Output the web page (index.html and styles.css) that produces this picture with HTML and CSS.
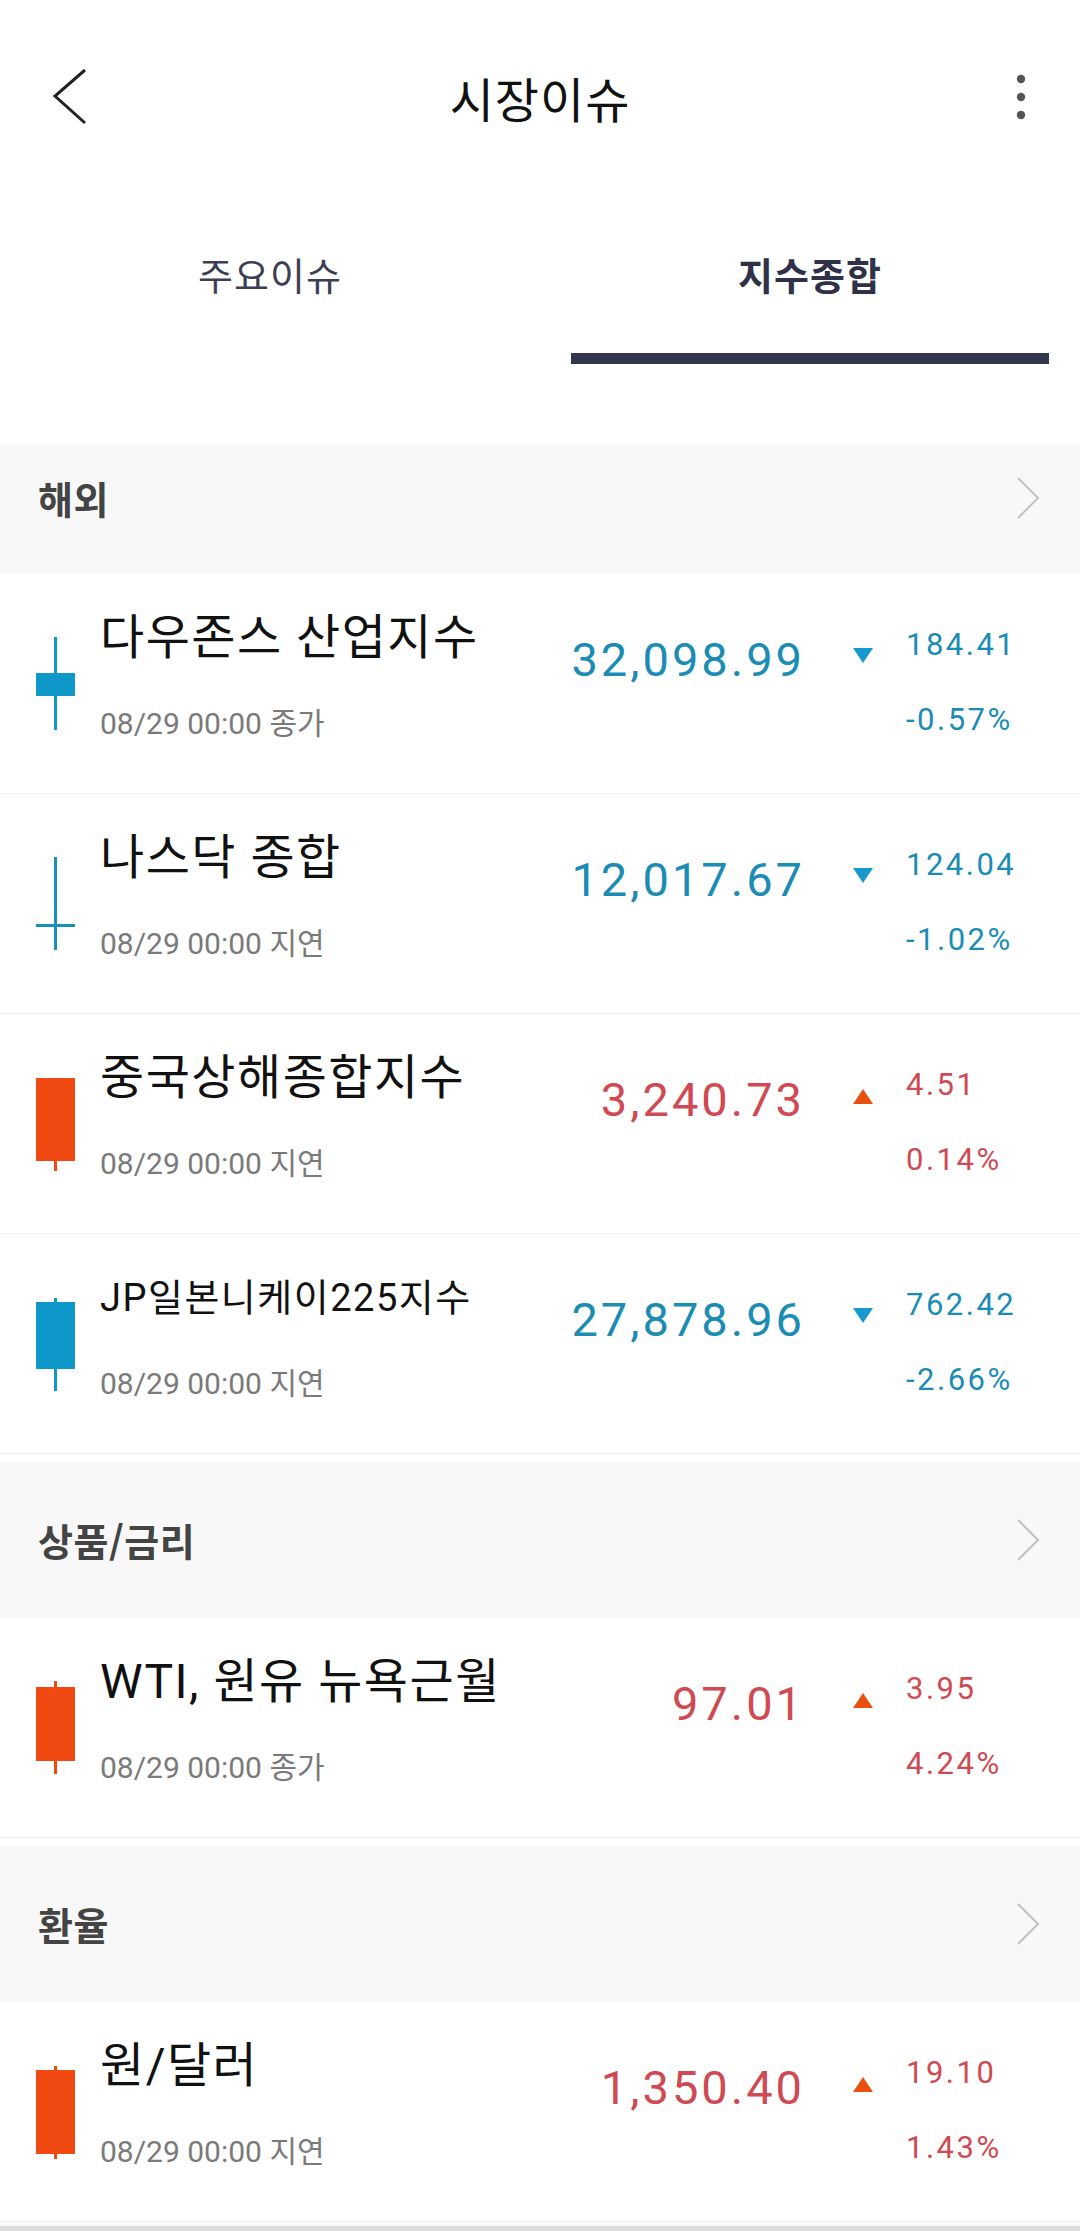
FILE: index.html
```html
<!DOCTYPE html>
<html lang="ko">
<head>
<meta charset="utf-8">
<title>시장이슈</title>
<link rel="stylesheet" href="styles.css">
</head>
<body>
<div class="app">
  <header class="appbar">
    <div class="appbar-side">
      <svg class="back" width="34" height="58" viewBox="0 0 34 58"><polyline points="32,2 2,28 32,55" fill="none" stroke="#222" stroke-width="3" stroke-linejoin="miter"/></svg>
    </div>
    <h1 class="title">시장이슈</h1>
    <div class="appbar-side right">
      <svg class="kebab" width="10" height="46" viewBox="0 0 10 46"><circle cx="5" cy="5" r="4.2" fill="#555"/><circle cx="5" cy="23" r="4.2" fill="#555"/><circle cx="5" cy="41" r="4.2" fill="#555"/></svg>
    </div>
  </header>

  <nav class="tabs">
    <div class="tab">주요이슈</div>
    <div class="tab active">지수종합</div>
  </nav>

  <section class="group first">
    <div class="sec-head"><span class="sec-title">해외</span><svg class="sec-chev" width="26" height="44" viewBox="0 0 26 44"><polyline points="3,2 23,22 3,42" fill="none" stroke="#c2c2c2" stroke-width="2"/></svg></div>

    <div class="row">
      <svg class="candle" width="39" height="94" viewBox="0 0 39 94"><rect x="18" y="0" width="3" height="93" fill="#0e98c9"/><rect x="0" y="36" width="39" height="23" fill="#0e98c9"/></svg>
      <div class="info"><div class="name">다우존스 산업지수</div><div class="date">08/29 00:00 종가</div></div>
      <div class="price down">32,098.99</div>
      <div class="arrow"><svg width="20" height="15" viewBox="0 0 20 15"><polygon points="0,0 20,0 10,15" fill="#1798cf"/></svg></div>
      <div class="change down"><div>184.41</div><div>-0.57%</div></div>
    </div>

    <div class="row">
      <svg class="candle" width="39" height="94" viewBox="0 0 39 94"><rect x="18" y="0" width="3" height="93" fill="#1891b6"/><rect x="0" y="67" width="39" height="3" fill="#1891b6"/></svg>
      <div class="info"><div class="name">나스닥 종합</div><div class="date">08/29 00:00 지연</div></div>
      <div class="price down">12,017.67</div>
      <div class="arrow"><svg width="20" height="15" viewBox="0 0 20 15"><polygon points="0,0 20,0 10,15" fill="#1798cf"/></svg></div>
      <div class="change down"><div>124.04</div><div>-1.02%</div></div>
    </div>

    <div class="row">
      <svg class="candle" width="39" height="94" viewBox="0 0 39 94"><rect x="18" y="80" width="3" height="14" fill="#f04a12"/><rect x="0" y="1" width="39" height="83" fill="#f04a12"/></svg>
      <div class="info"><div class="name">중국상해종합지수</div><div class="date">08/29 00:00 지연</div></div>
      <div class="price up">3,240.73</div>
      <div class="arrow up-arrow"><svg width="20" height="15" viewBox="0 0 20 15"><polygon points="10,0 20,15 0,15" fill="#e8500f"/></svg></div>
      <div class="change up"><div>4.51</div><div>0.14%</div></div>
    </div>

    <div class="row">
      <svg class="candle" width="39" height="94" viewBox="0 0 39 94"><rect x="18" y="1" width="3" height="93" fill="#0e98c9"/><rect x="0" y="5" width="39" height="67" fill="#0e98c9"/></svg>
      <div class="info"><div class="name small">JP일본니케이225지수</div><div class="date">08/29 00:00 지연</div></div>
      <div class="price down">27,878.96</div>
      <div class="arrow"><svg width="20" height="15" viewBox="0 0 20 15"><polygon points="0,0 20,0 10,15" fill="#1798cf"/></svg></div>
      <div class="change down"><div>762.42</div><div>-2.66%</div></div>
    </div>
  </section>

  <section class="group">
    <div class="sec-head"><span class="sec-title">상품/금리</span><svg class="sec-chev" width="26" height="44" viewBox="0 0 26 44"><polyline points="3,2 23,22 3,42" fill="none" stroke="#c2c2c2" stroke-width="2"/></svg></div>

    <div class="row">
      <svg class="candle" width="39" height="94" viewBox="0 0 39 94"><rect x="18" y="0" width="3" height="93" fill="#f04a12"/><rect x="0" y="6" width="39" height="74" fill="#f04a12"/></svg>
      <div class="info"><div class="name">WTI, 원유 뉴욕근월</div><div class="date">08/29 00:00 종가</div></div>
      <div class="price up">97.01</div>
      <div class="arrow up-arrow"><svg width="20" height="15" viewBox="0 0 20 15"><polygon points="10,0 20,15 0,15" fill="#e8500f"/></svg></div>
      <div class="change up"><div>3.95</div><div>4.24%</div></div>
    </div>
  </section>

  <section class="group">
    <div class="sec-head"><span class="sec-title">환율</span><svg class="sec-chev" width="26" height="44" viewBox="0 0 26 44"><polyline points="3,2 23,22 3,42" fill="none" stroke="#c2c2c2" stroke-width="2"/></svg></div>

    <div class="row">
      <svg class="candle" width="39" height="94" viewBox="0 0 39 94"><rect x="18" y="1" width="3" height="93" fill="#f04a12"/><rect x="0" y="5" width="39" height="84" fill="#f04a12"/></svg>
      <div class="info"><div class="name">원/달러</div><div class="date">08/29 00:00 지연</div></div>
      <div class="price up">1,350.40</div>
      <div class="arrow up-arrow"><svg width="20" height="15" viewBox="0 0 20 15"><polygon points="10,0 20,15 0,15" fill="#e8500f"/></svg></div>
      <div class="change up"><div>19.10</div><div>1.43%</div></div>
    </div>
  </section>

  <div class="bottom-edge"></div>
</div>
</body>
</html>
```

FILE: styles.css
```css
* { box-sizing: border-box; }
html, body { margin: 0; padding: 0; background: #ffffff; }
body {
  font-family: "Noto Sans CJK KR", "Noto Sans", sans-serif;
  color: #111;
}
.app { width: 1080px; min-height: 2237px; background: #fff; overflow: hidden; }

/* App bar */
.appbar {
  height: 194px;
  display: grid;
  grid-template-columns: 1fr auto 1fr;
  align-items: center;
}
.appbar-side { display: flex; align-items: center; padding-left: 53px; }
.appbar-side.right { justify-content: flex-end; padding-left: 0; padding-right: 54px; }
.back { display: block; }
.kebab { display: block; }
.title {
  margin: 0;
  font-size: 48px;
  font-weight: 400;
  color: #111;
  line-height: 60px;
  letter-spacing: 1px;
}

/* Tabs */
.tabs {
  display: flex;
  height: 170px;
}
.tab {
  flex: 1;
  position: relative;
  text-align: center;
  padding-top: 55px;
  font-size: 38px;
  line-height: 50px;
  letter-spacing: 1px;
  color: #3c3f53;
  font-weight: 400;
}
.tab.active { color: #2e3148; font-weight: 700; }
.tab.active::after {
  content: "";
  position: absolute;
  left: 31px;
  right: 31px;
  bottom: 0;
  height: 11px;
  background: #32364f;
}

/* Groups */
.group { margin-top: 8px; }
.group.first { margin-top: 81px; }
.sec-head {
  height: 156px;
  background: #f8f8f8;
  display: flex;
  align-items: center;
  justify-content: space-between;
  padding: 0 39px 0 38px;
}
.group.first .sec-head { height: 129px; padding-bottom: 23px; }
.sec-title {
  font-size: 38px;
  font-weight: 700;
  color: #444;
  line-height: 50px;
  letter-spacing: 0.5px;
}
.sec-chev { display: block; }

/* Rows */
.row {
  height: 220px;
  border-bottom: 1px solid #efefef;
  display: grid;
  grid-template-columns: 39px 485px 245px 101px 1fr;
  align-items: start;
  padding-left: 36px;
}
.candle { display: block; margin-top: 63px; }
.info { padding-left: 25px; padding-top: 34px; }
.name {
  font-family: "Roboto", "Noto Sans CJK KR", sans-serif;
  font-size: 48px;
  line-height: 60px;
  letter-spacing: 1.5px;
  color: #111;
  white-space: nowrap;
}
.name.small { font-size: 38px; letter-spacing: 1.5px; }
.date {
  margin-top: 36px;
  font-family: "Roboto", "Noto Sans CJK KR", sans-serif;
  font-size: 30px;
  line-height: 40px;
  color: #7a7a7a;
  white-space: nowrap;
}
.price {
  padding-top: 56px;
  font-family: "Roboto", sans-serif;
  font-size: 47px;
  line-height: 60px;
  letter-spacing: 3px;
  text-align: right;
}
.arrow { padding-top: 74px; padding-left: 48px; }
.arrow svg { display: block; }
.up-arrow { padding-top: 75px; }
.change {
  padding-top: 33px;
  font-family: "Roboto", sans-serif;
  font-size: 31px;
  line-height: 75px;
  letter-spacing: 2.5px;
}
.down { color: #1b8cb4; }
.up { color: #cf4a53; }

.bottom-edge {
  height: 9px;
  background: #fafafa;
  border-bottom: 5px solid #dedede;
}
```
